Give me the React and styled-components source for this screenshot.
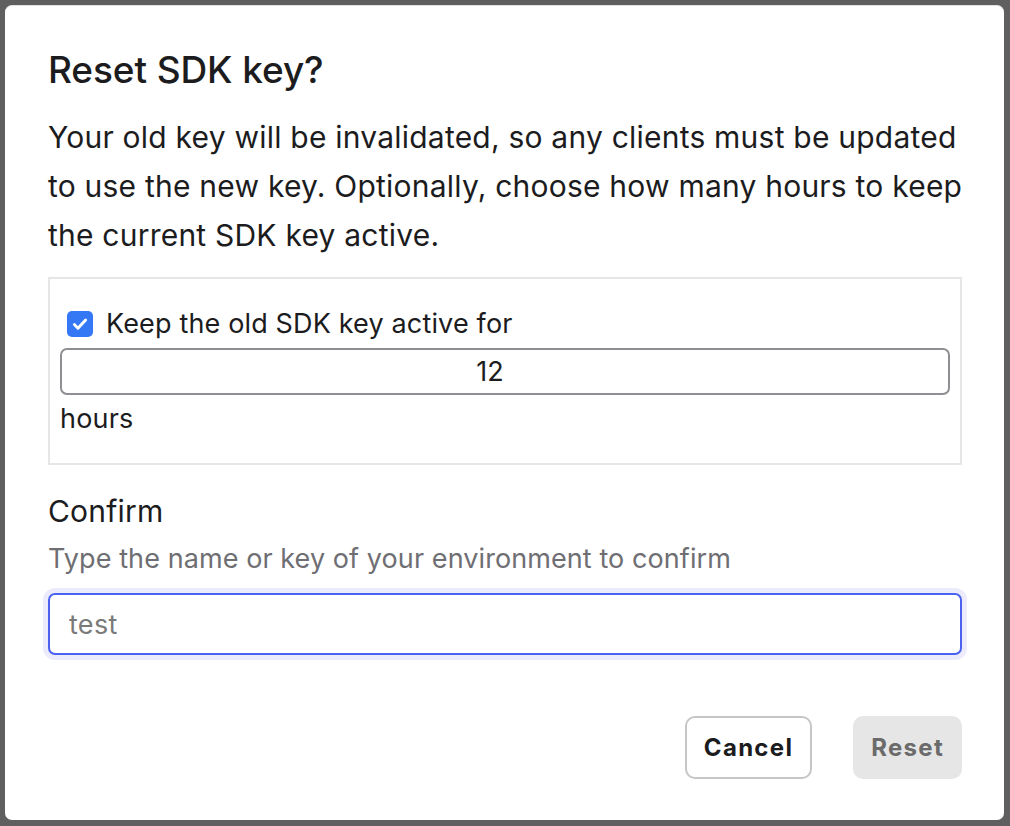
import React, { useState } from 'react'
import styled, { createGlobalStyle } from 'styled-components'

const Global = createGlobalStyle`
  html, body {
    margin: 0;
    padding: 0;
    background: #5f5f5f;
  }
  * {
    box-sizing: border-box;
  }
`

const Backdrop = styled.div`
  width: 1010px;
  height: 826px;
  padding: 5px 6px 6px 5px;
  overflow: hidden;
  font-family: Inter, "Liberation Sans", sans-serif;
  color: #1c1c1e;
`

const Modal = styled.div`
  width: 999px;
  height: 815px;
  background: #fff;
  border-radius: 7px;
  border-top: 1px solid #e2e2e2;
  padding: 42px 42px 0 43px;
  display: flex;
  flex-direction: column;
`

const Title = styled.h2`
  margin: 0;
  font-size: 37px;
  line-height: 44px;
  font-weight: 500;
  letter-spacing: -0.1px;
`

const Lead = styled.p`
  margin: 21px -12px 0 0;
  font-size: 30px;
  line-height: 49px;
  font-weight: 400;
  letter-spacing: 0.22px;
`

const Fieldset = styled.div`
  margin-top: 17px;
  border: 2px solid #e6e6e6;
  padding: 28px 10px 24px 10px;
`

const CheckRow = styled.label`
  display: flex;
  align-items: center;
  gap: 13px;
  padding-left: 7px;
  font-size: 27px;
  line-height: 34px;
  letter-spacing: 0.15px;
`

const Check = styled.span`
  width: 26px;
  height: 26px;
  border-radius: 5px;
  background: ${p => (p.$on ? '#3478f6' : '#fff')};
  border: ${p => (p.$on ? 'none' : '2px solid #8e8e93')};
  display: flex;
  align-items: center;
  justify-content: center;
  flex-shrink: 0;
`

const NumberInput = styled.input`
  display: block;
  width: 890px;
  height: 47px;
  margin-top: 7px;
  border: 2px solid #8e8e93;
  border-radius: 7px;
  font-family: inherit;
  font-size: 27px;
  color: #1c1c1e;
  text-align: center;
  padding: 0 30px 0 0;
  outline: none;
  background: #fff;
`

const Unit = styled.div`
  margin-top: 4px;
  font-size: 27px;
  line-height: 40px;
  letter-spacing: 0.2px;
`

const Label = styled.div`
  margin-top: 26px;
  font-size: 30px;
  line-height: 40px;
  letter-spacing: 0.2px;
`

const Hint = styled.div`
  margin-top: 10px;
  font-size: 27px;
  line-height: 36px;
  letter-spacing: 0.08px;
  color: #6e6e73;
`

const Ring = styled.div`
  margin: 11px -5px 0;
  padding: 5px;
  border-radius: 12px;
  background: #ebebfb;
`

const TextInput = styled.input`
  display: block;
  width: 100%;
  height: 62px;
  border: 2px solid #4a62ef;
  border-radius: 7px;
  padding: 0 19px;
  font-family: inherit;
  font-size: 27px;
  letter-spacing: 0.3px;
  color: #1c1c1e;
  outline: none;
  background: #fff;

  &::placeholder {
    color: #7a7a7a;
  }
`

const Footer = styled.div`
  margin-top: 56px;
  display: flex;
  justify-content: flex-end;
  gap: 41px;
`

const Button = styled.button`
  height: 63px;
  padding: 0 ${p => (p.$ghost ? '17px' : '18px')};
  border-radius: 10px;
  font-family: inherit;
  font-size: 24px;
  font-weight: 700;
  letter-spacing: 1.3px;
  cursor: pointer;
  border: ${p => (p.$ghost ? '2px solid #c6c6c6' : 'none')};
  background: ${p => (p.$ghost ? '#fff' : '#e6e6e6')};
  color: ${p => (p.$ghost ? '#1c1c1e' : '#6b6b6b')};
`

const App = () => {
  const [keep, setKeep] = useState(true)
  const [hours, setHours] = useState('12')
  const [name, setName] = useState('')

  return (
    <>
      <Global />
      <Backdrop>
        <Modal>
          <Title>Reset SDK key?</Title>
          <Lead>
            Your old key will be invalidated, so any clients must be updated to use the new key.
            Optionally, choose how many hours to keep the current SDK key active.
          </Lead>
          <Fieldset>
            <CheckRow onClick={() => setKeep(!keep)}>
              <Check $on={keep}>
                {keep && (
                  <svg width="18" height="18" viewBox="0 0 16 16">
                    <path d="M3 8.5l3.2 3.2L13 4.5" fill="none" stroke="#fff" strokeWidth="2.6" strokeLinecap="round" strokeLinejoin="round" />
                  </svg>
                )}
              </Check>
              Keep the old SDK key active for
            </CheckRow>
            <NumberInput type="text" value={hours} onChange={e => setHours(e.target.value)} />
            <Unit>hours</Unit>
          </Fieldset>
          <Label>Confirm</Label>
          <Hint>Type the name or key of your environment to confirm</Hint>
          <Ring>
            <TextInput placeholder="test" value={name} onChange={e => setName(e.target.value)} />
          </Ring>
          <Footer>
            <Button $ghost>Cancel</Button>
            <Button disabled={name !== 'test'}>Reset</Button>
          </Footer>
        </Modal>
      </Backdrop>
    </>
  )
}

export default App
